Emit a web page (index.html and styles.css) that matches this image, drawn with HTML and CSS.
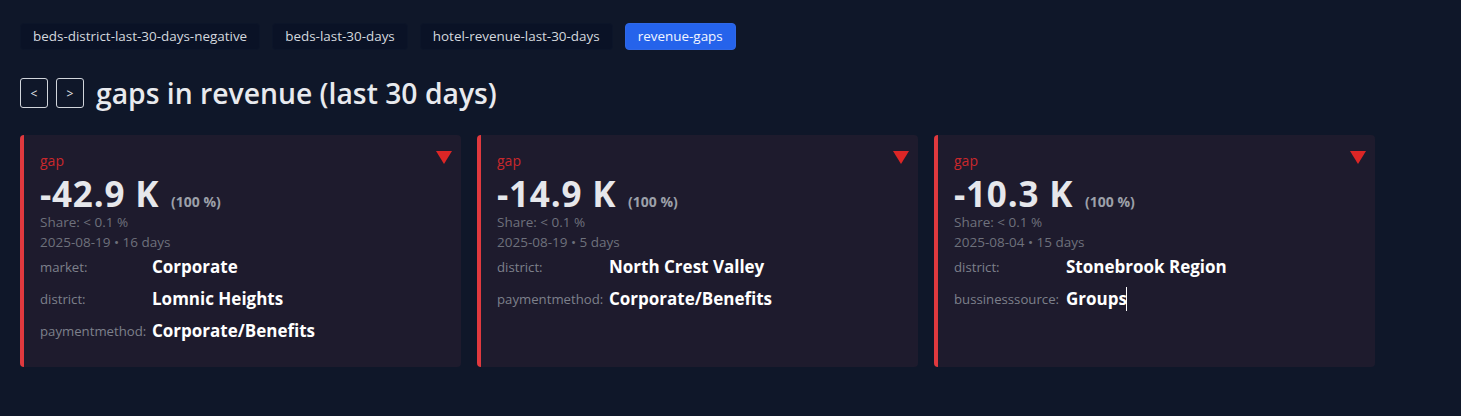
FILE: index.html
```html
<!DOCTYPE html>
<html lang="en">
<head>
<meta charset="utf-8">
<title>gaps in revenue</title>
<link rel="stylesheet" href="styles.css">
</head>
<body>
<main class="page">
  <nav class="tabs">
    <button class="tab">beds-district-last-30-days-negative</button>
    <button class="tab">beds-last-30-days</button>
    <button class="tab">hotel-revenue-last-30-days</button>
    <button class="tab tab-active">revenue-gaps</button>
  </nav>

  <header class="heading">
    <button class="nav-btn">&lt;</button>
    <button class="nav-btn">&gt;</button>
    <h1 class="title">gaps in revenue (last 30 days)</h1>
  </header>

  <section class="cards">
    <article class="card">
      <span class="trend" aria-hidden="true"></span>
      <div class="kind">gap</div>
      <div class="value">-42.9 K <span class="pct">(100 %)</span></div>
      <div class="meta">Share: &lt; 0.1 %</div>
      <div class="meta">2025-08-19 • 16 days</div>
      <dl class="attrs">
        <dt>market:</dt><dd>Corporate</dd>
        <dt>district:</dt><dd>Lomnic Heights</dd>
        <dt>paymentmethod:</dt><dd>Corporate/Benefits</dd>
      </dl>
    </article>

    <article class="card">
      <span class="trend" aria-hidden="true"></span>
      <div class="kind">gap</div>
      <div class="value">-14.9 K <span class="pct">(100 %)</span></div>
      <div class="meta">Share: &lt; 0.1 %</div>
      <div class="meta">2025-08-19 • 5 days</div>
      <dl class="attrs">
        <dt>district:</dt><dd>North Crest Valley</dd>
        <dt>paymentmethod:</dt><dd>Corporate/Benefits</dd>
      </dl>
    </article>

    <article class="card">
      <span class="trend" aria-hidden="true"></span>
      <div class="kind">gap</div>
      <div class="value">-10.3 K <span class="pct">(100 %)</span></div>
      <div class="meta">Share: &lt; 0.1 %</div>
      <div class="meta">2025-08-04 • 15 days</div>
      <dl class="attrs">
        <dt>district:</dt><dd>Stonebrook Region</dd>
        <dt>bussinesssource:</dt><dd>Groups<span class="caret"></span></dd>
      </dl>
    </article>
  </section>
</main>
</body>
</html>
```

FILE: styles.css
```css
* {
  box-sizing: border-box;
}

html, body {
  margin: 0;
  padding: 0;
  background: #0f1729;
  color: #e5e7eb;
  font-family: "Open Sans", "Noto Sans", sans-serif;
}

.page {
  padding: 23px 20px 20px;
}

/* report tabs */
.tabs {
  display: flex;
  gap: 12px;
}

.tab {
  font-family: inherit;
  font-size: 13.45px;
  line-height: 17px;
  color: #d4d8de;
  background: #0a1226;
  border: 1px solid #0c1529;
  border-radius: 4px;
  padding: 4px 12px;
  height: 27px;
  cursor: pointer;
}

.tab-active {
  background: #2563eb;
  border-color: #2f68e6;
  color: #f3f6ff;
}

/* title row */
.heading {
  display: flex;
  align-items: center;
  gap: 8px;
  margin-top: 25px;
}

.nav-btn {
  width: 28px;
  height: 30px;
  padding: 0;
  font-family: inherit;
  font-size: 12px;
  color: #e5e7eb;
  background: #0f1729;
  border: 1px solid #d1d5db;
  border-radius: 3px;
}

.title {
  margin: 0 0 0 4px;
  font-size: 28.3px;
  line-height: 36px;
  font-weight: 600;
  color: #e8eaee;
}

/* gap cards */
.cards {
  display: flex;
  gap: 16px;
  margin-top: 24px;
}

.card {
  position: relative;
  width: 441px;
  height: 232px;
  background: #1e1b2d;
  border-left: 4px solid #e0393e;
  border-radius: 4px;
  padding: 17px 20px 16px 16px;
}

.trend {
  position: absolute;
  top: 16px;
  right: 9px;
  width: 0;
  height: 0;
  border-left: 8px solid transparent;
  border-right: 8px solid transparent;
  border-top: 13px solid #dc2626;
}

.kind {
  font-size: 14px;
  line-height: 18px;
  color: #c9282c;
}

.value {
  font-size: 35px;
  font-weight: 700;
  line-height: 36px;
  margin: 6px 0 0;
  letter-spacing: 0.8px;
  color: #e6e7eb;
}

.pct {
  font-size: 14px;
  font-weight: 700;
  line-height: 1;
  letter-spacing: 0;
  margin-left: 2px;
  color: #9ca0a9;
}

.meta {
  font-size: 13.5px;
  line-height: 20px;
  color: #6e717c;
}

.attrs {
  display: grid;
  grid-template-columns: 112px 1fr;
  grid-auto-rows: 32px;
  margin: 3px 0 0;
  align-items: start;
}

.attrs dt {
  font-size: 13.2px;
  line-height: 24px;
  color: #7d808b;
  white-space: nowrap;
}

.attrs dd {
  margin: 0;
  font-size: 17px;
  font-weight: 700;
  line-height: 24px;
  color: #ffffff;
}

.caret {
  display: inline-block;
  width: 1px;
  height: 24px;
  background: #ffffff;
  vertical-align: -6px;
  margin-left: -1px;
}
```
